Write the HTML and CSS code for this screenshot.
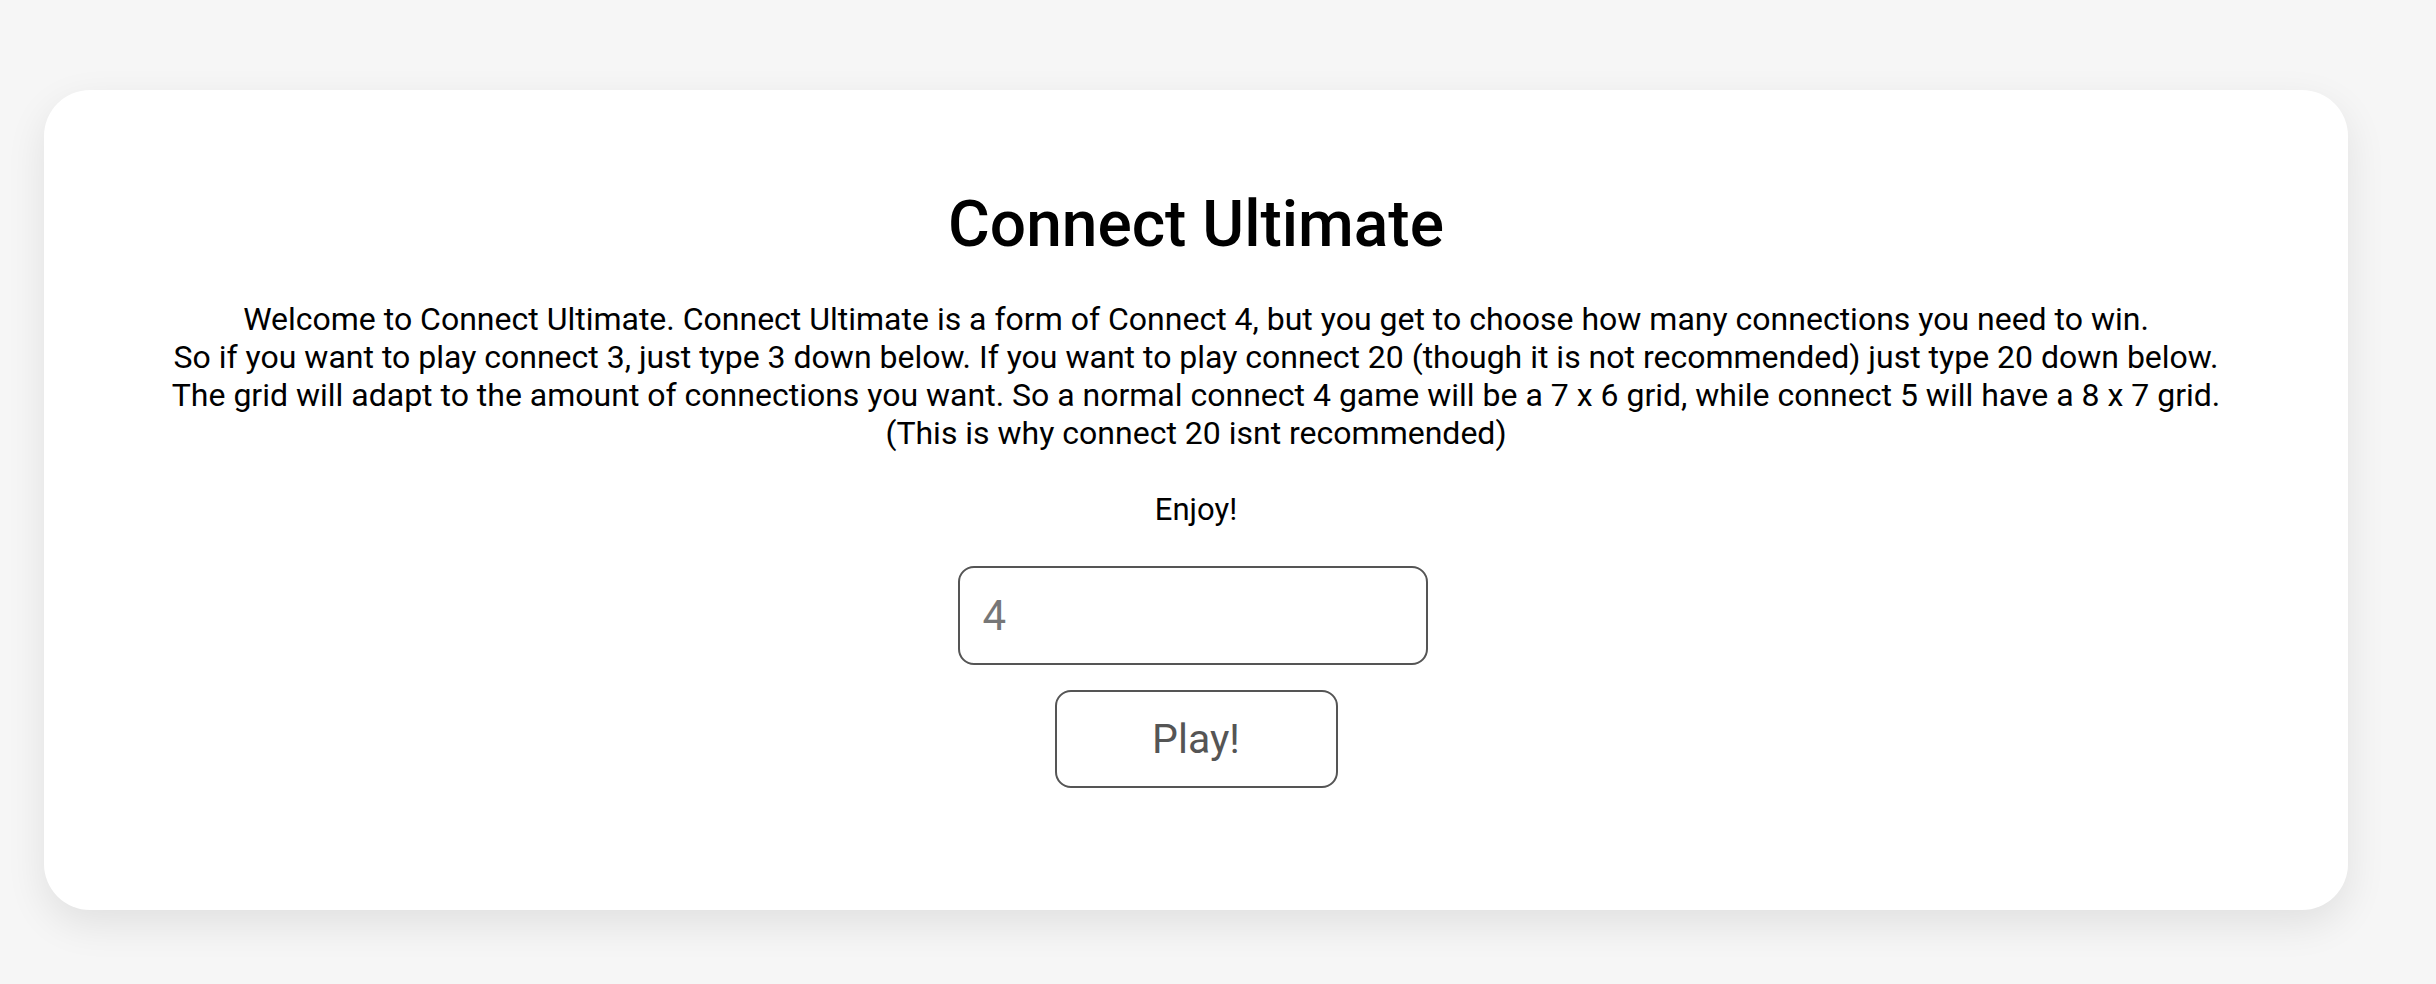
FILE: index.html
```html
<!DOCTYPE html>
<html>
<head>
<meta charset="utf-8">
<title>Connect Ultimate</title>
<link rel="stylesheet" href="styles.css">
</head>
<body>
<main class="card">
  <h1 class="title">Connect Ultimate</h1>
  <p class="intro">Welcome to Connect Ultimate. Connect Ultimate is a form of Connect 4, but you get to choose how many connections you need to win.<br>So if you want to play connect 3, just type 3 down below. If you want to play connect 20 (though it is not recommended) just type 20 down below.<br>The grid will adapt to the amount of connections you want. So a normal connect 4 game will be a 7 x 6 grid, while connect 5 will have a 8 x 7 grid.<br>(This is why connect 20 isnt recommended)</p>
  <p class="enjoy">Enjoy!</p>
  <form class="controls">
    <input class="count" type="text" placeholder="4">
    <button class="play" type="button">Play!</button>
  </form>
</main>
</body>
</html>
```
FILE: styles.css
```css
html, body {
  margin: 0;
  padding: 0;
  background: #f6f6f6;
}
body {
  font-family: Roboto, "Liberation Sans", sans-serif;
  color: #000;
  padding: 90px 88px 74px 44px;
}
.card {
  background: #fff;
  border-radius: 46px;
  box-shadow: 0 14px 40px rgba(0, 0, 0, 0.09);
  padding: 97px 40px 122px;
  display: flex;
  flex-direction: column;
  align-items: center;
  text-align: center;
}
.title {
  font-size: 64px;
  font-weight: 500;
  line-height: 75px;
  margin: 0 0 38px;
}
.intro {
  font-size: 32px;
  line-height: 38px;
  margin: 0 0 39px;
}
.enjoy {
  font-size: 31px;
  line-height: 38px;
  margin: 0 0 37px;
}
.controls {
  display: flex;
  flex-direction: column;
  align-items: center;
  gap: 25px;
}
.count {
  box-sizing: border-box;
  width: 470px;
  height: 99px;
  margin-right: 7px;
  border: 2px solid #555;
  border-radius: 16px;
  padding: 0 23px;
  font-family: Roboto, "Liberation Sans", sans-serif;
  font-size: 42px;
  color: #333;
  outline: none;
}
.count::placeholder {
  color: #777;
}
.play {
  box-sizing: border-box;
  width: 283px;
  height: 98px;
  border: 2px solid #555;
  border-radius: 16px;
  background: #fff;
  font-family: Roboto, "Liberation Sans", sans-serif;
  font-size: 41px;
  color: #555;
  cursor: pointer;
}
```
